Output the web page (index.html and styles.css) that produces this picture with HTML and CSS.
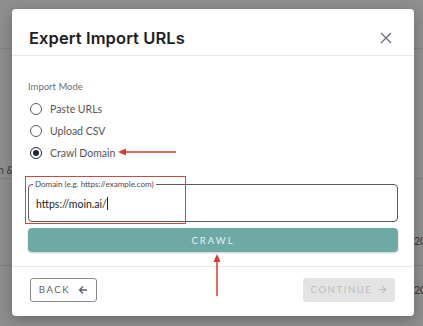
FILE: index.html
```html
<!DOCTYPE html>
<html lang="en">
<head>
    <meta charset="UTF-8">
    <meta name="viewport" content="width=device-width, initial-scale=1.0">
    <title>Expert Import URLs</title>
    <link rel="stylesheet" href="styles.css">
</head>
<body>
    <div class="backdrop">
        <div class="bg-row"></div>
        <div class="bg-row bg-tall"><span class="bg-left">n &amp;</span></div>
        <div class="bg-row bg-mid"><span class="bg-right r1">20</span></div>
        <div class="bg-row bg-low"><span class="bg-right r2">20</span></div>
    </div>

    <div class="dialog">
        <div class="dialog-header">
            <h2>Expert Import URLs</h2>
            <svg class="close" width="12" height="12" viewBox="0 0 12 12">
                <path d="M1 1 L11 11 M11 1 L1 11" stroke="#6c6a7c" stroke-width="1.3" fill="none"/>
            </svg>
        </div>

        <div class="dialog-body">
            <div class="group-label">Import Mode</div>
            <label class="radio"><span class="dot"></span>Paste URLs</label>
            <label class="radio"><span class="dot"></span>Upload CSV</label>
            <label class="radio checked"><span class="dot"></span>Crawl Domain</label>

            <fieldset class="field">
                <legend>Domain (e.g. https://example.com)</legend>
                <div class="field-value">https://moin.ai/<span class="caret"></span></div>
            </fieldset>
            <button class="crawl">CRAWL</button>
        </div>

        <div class="dialog-footer">
            <button class="btn-back">BACK
                <svg width="10" height="10" viewBox="0 0 10 10"><path d="M9 5 H1.5 M5 1.5 L1.5 5 L5 8.5" stroke="#5f5d6e" stroke-width="1.3" fill="none"/></svg>
            </button>
            <button class="btn-continue" disabled>CONTINUE
                <svg width="9" height="9" viewBox="0 0 10 10"><path d="M1 5 H8.5 M5 1.5 L8.5 5 L5 8.5" stroke="#bdbdbd" stroke-width="1.3" fill="none"/></svg>
            </button>
        </div>
    </div>

    <!-- annotations drawn over the screenshot -->
    <div class="mark-box"></div>
    <svg class="mark-arrow arrow-left" width="58" height="10" viewBox="0 0 58 10">
        <path d="M58 5 H6" stroke="#d9382c" stroke-width="1.5"/>
        <path d="M0 5 L8 1.5 L8 8.5 Z" fill="#d9382c"/>
    </svg>
    <svg class="mark-arrow arrow-up" width="10" height="42" viewBox="0 0 10 42">
        <path d="M5 42 V6" stroke="#d9382c" stroke-width="1.5"/>
        <path d="M5 0 L1.5 8 L8.5 8 Z" fill="#d9382c"/>
    </svg>
</body>
</html>
```

FILE: styles.css
```css
body {
    margin: 0;
    width: 423px;
    height: 326px;
    overflow: hidden;
    background-color: #8e8e8e;
    font-family: 'Lato', 'Noto Sans', sans-serif;
    position: relative;
}

/* page behind the modal */
.backdrop {
    padding-top: 48px;
}

.bg-row {
    height: 0;
    border-top: 1px solid #808080;
    position: relative;
}

.bg-tall {
    margin-top: 129px;
}

.bg-mid {
    margin-top: 86px;
}

.bg-low {
    margin-top: 60px;
}

.bg-left,
.bg-right {
    position: absolute;
    font-size: 10.5px;
    color: #3a3a3a;
}

.bg-left {
    left: -2px;
    top: -15px;
}

.bg-right {
    left: 414px;
}

.r1 {
    top: -31px;
}

.r2 {
    top: -43px;
}

/* modal */
.dialog {
    position: absolute;
    left: 12px;
    top: 9px;
    width: 402px;
    height: 307px;
    background-color: #ffffff;
    border-radius: 4px;
    box-shadow: 0 4px 14px rgba(0, 0, 0, 0.25);
    display: flex;
    flex-direction: column;
}

.dialog-header {
    height: 47px;
    box-sizing: border-box;
    border-bottom: 1px solid #e8e8e8;
    display: flex;
    align-items: center;
    justify-content: space-between;
    padding: 11px 22px 0 17px;
}

.dialog-header h2 {
    margin: 0;
    font-family: 'Inter', 'Open Sans', sans-serif;
    font-size: 16.5px;
    font-weight: 600;
    color: #1e1e24;
    letter-spacing: 0.1px;
}

.close {
    margin-top: 1px;
}

.dialog-body {
    padding: 25px 16px 14px 16px;
    border-bottom: 1px solid #e8e8e8;
}

.group-label {
    font-size: 9.5px;
    color: #6f6f6f;
    margin-bottom: 6px;
}

.radio {
    display: flex;
    align-items: center;
    height: 22px;
    font-size: 10.5px;
    color: #555555;
    padding-left: 2px;
}

.dot {
    width: 10px;
    height: 10px;
    border: 1.5px solid #5c5c5c;
    border-radius: 50%;
    margin-right: 8px;
    position: relative;
}

.checked .dot {
    border-color: #1f2740;
}

.checked .dot::after {
    content: '';
    position: absolute;
    left: 2px;
    top: 2px;
    width: 6px;
    height: 6px;
    border-radius: 50%;
    background-color: #1f2740;
}

.field {
    margin: 15px 0 0 0;
    padding: 0 7px 0 7px;
    border: 1.5px solid #5a5a5a;
    border-radius: 4px;
    box-sizing: border-box;
    height: 43px;
}

.field legend {
    font-size: 8px;
    color: #4a4a4a;
    padding: 0 2px;
    margin-left: -3px;
}

.field-value {
    font-size: 10.5px;
    color: #222222;
    margin-top: 8px;
    display: flex;
    align-items: center;
}

.caret {
    display: inline-block;
    width: 1px;
    height: 13px;
    background-color: #222222;
}

.crawl {
    display: block;
    width: 100%;
    height: 24px;
    margin-top: 6px;
    border: none;
    border-radius: 4px;
    background-color: #6ea9a6;
    color: #e8f1f0;
    font-family: 'Lato', sans-serif;
    font-size: 9.5px;
    letter-spacing: 2px;
    box-shadow: 0 1px 2px rgba(0, 0, 0, 0.2);
}

.dialog-footer {
    flex: 1;
    display: flex;
    align-items: center;
    justify-content: space-between;
    padding: 0 19px 4px 18px;
}

.btn-back,
.btn-continue {
    display: flex;
    align-items: center;
    gap: 8px;
    height: 24px;
    border-radius: 3px;
    font-family: 'Lato', sans-serif;
    font-size: 9.5px;
    letter-spacing: 1.6px;
}

.btn-back {
    width: 67px;
    justify-content: center;
    background-color: #ffffff;
    border: 1px solid #8a8a8a;
    color: #5f5d6e;
}

.btn-continue {
    width: 92px;
    justify-content: center;
    gap: 6px;
    background-color: #e3e3e3;
    border: none;
    color: #bdbdbd;
}

/* red annotation marks */
.mark-box {
    position: absolute;
    left: 25px;
    top: 176px;
    width: 159px;
    height: 46px;
    border: 1.5px solid #cf4a3e;
}

.mark-arrow {
    position: absolute;
}

.arrow-left {
    left: 118px;
    top: 147px;
}

.arrow-up {
    left: 212px;
    top: 254px;
}
```
